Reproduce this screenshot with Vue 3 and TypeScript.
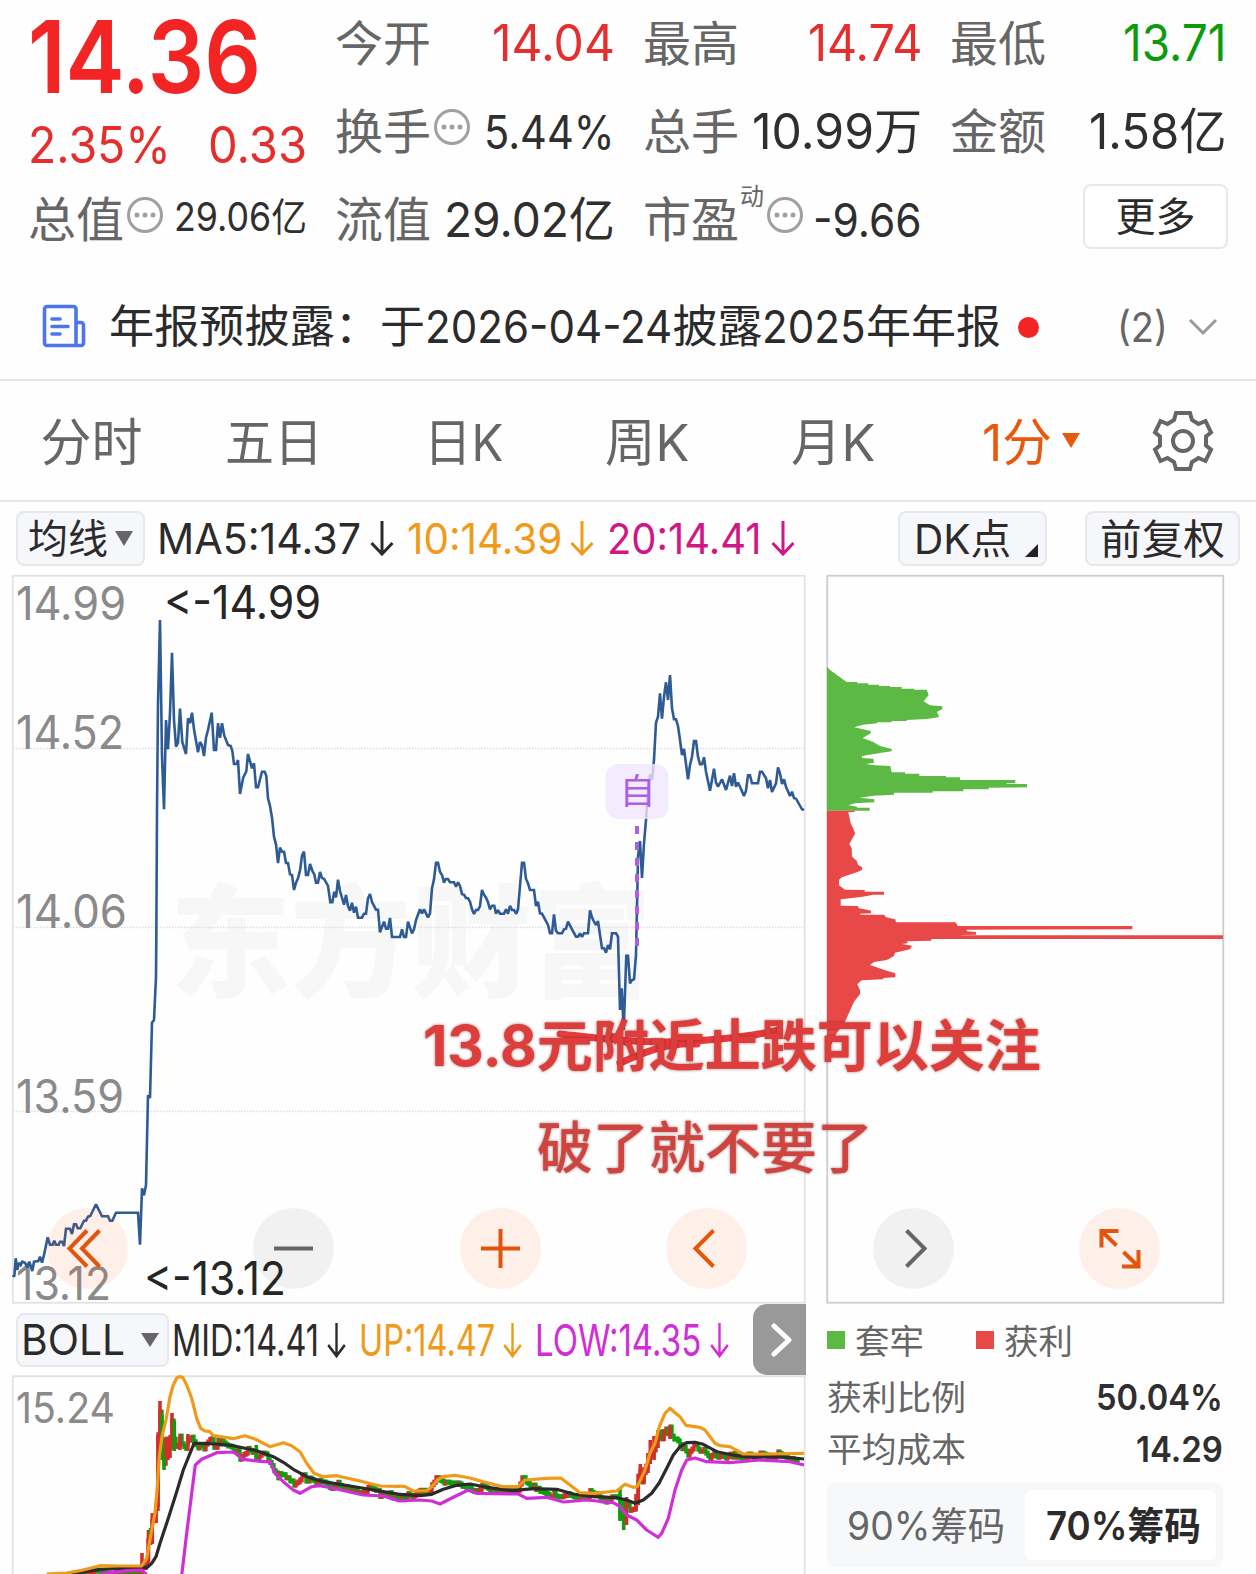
<script setup lang="ts">
import type { Directive } from 'vue'

type Pt = [number, number]
interface Quote { label: string; value: string; width: number; size: number; tone?: string; info?: boolean }

// Condenses or widens a run of text so that it takes exactly the given width.
const vFit: Directive<HTMLElement, number> = {
  mounted(el, { value }) {
    const natural = el.offsetWidth
    el.style.transform = `scaleX(${value / natural})`
    el.style.marginRight = `${value - natural}px`
  },
}

const quotes: Quote[] = [
  { label: '今开', value: '14.04', width: 123, size: 50, tone: 'up' },
  { label: '最高', value: '14.74', width: 114, size: 50, tone: 'up' },
  { label: '最低', value: '13.71', width: 103, size: 50, tone: 'down' },
  { label: '换手', value: '5.44%', width: 131, size: 46, info: true },
  { label: '总手', value: '10.99万', width: 170, size: 49 },
  { label: '金额', value: '1.58亿', width: 137, size: 49 },
]

const tabs = ['分时', '五日', '日K', '周K', '月K']
const tabWidths = [102, 98, 79, 84, 84]

// Series are stored in thirds of a pixel relative to an origin.
function series(ox: number, oy: number, raw: string): Pt[] {
  return raw.trim().split(/\s+/).map((p) => {
    const [x, y] = p.split(',').map(Number)
    return [ox + x / 3, oy + y / 3]
  })
}
const toPoints = (pts: Pt[]) => pts.map((p) => `${p[0].toFixed(1)},${p[1].toFixed(1)}`).join(' ')

const price: Pt[] = [
  ...series(0, 940, `38,1005 43,1010 47,955 52,990 57,968 62,975 67,965 75,968 82,982 88,965 97,993 102,965 115,963 120,950 126,968 132,945 143,892 150,914 158,914 163,902 168,914 176,914 180,905 186,905 192,918 198,866 210,866 216,882 222,853 228,853 233,865 241,865 252,842 258,842 264,830 271,828 288,793 306,829 324,829 330,842 337,842 348,818 414,818 420,914 426,745 432,766 438,735 444,466 450,474 456,248 462,240 468,110`),
  ...series(0, 570, `469,1110 471,720 474,400 480,150 486,560 492,718 498,450 504,538 510,430 516,248 522,450 528,530 534,518 540,416 547,516 558,552 564,445 570,460 576,428 582,478 594,547 600,516 606,526 612,558 618,503 624,480 635,428 642,540 648,540 654,460 660,503 666,460 673,497 684,525 692,528 697,542 702,582 710,582 714,570 720,672 730,622 739,604 744,552 756,595 762,580 768,652 774,652 786,605 794,605 799,617 804,685 810,708 816,743 822,800 828,823 834,879 840,833 846,845 852,845 858,879 864,879 870,913 876,915 882,960 888,938 894,925 900,902 906,857 912,845 918,915 924,915 930,882 938,905 943,913 948,938 954,938 960,906 966,924 972,926 984,948 991,997 997,997 1003,965 1008,982 1014,929 1020,963 1032,1004 1038,975 1044,1008 1050,1022 1056,998 1062,1028 1068,1010 1074,1043 1086,1043 1092,1031 1098,1031 1104,985 1110,972 1116,996 1128,1019 1134,1019 1140,1087 1152,1055 1158,1076 1164,1076 1170,1044 1176,1101 1198,1101`),
  ...series(400, 640, `0,891 6,868 12,891 18,891 24,845 36,880 42,868 48,840 60,808 66,820 72,808 78,820 84,832 90,820 96,745 102,718 108,668 114,668 120,695 126,705 132,728 137,717 144,717 150,727 162,727 168,740 174,727 180,738 186,762 192,764 198,774 204,775 210,785 216,808 222,822 228,810 234,810 240,798 246,750 252,764 258,773 264,787 270,808 276,797 283,797 288,821 294,810 300,821 312,821 318,808 324,821 330,797 336,810 342,810 349,821 354,808 360,738 366,668 372,668 378,717 384,730 390,750 402,750 408,798 414,785 420,820 426,821 432,832 444,855 450,880 456,880 462,823 468,872 474,880 486,880 492,868 498,866 504,845 516,868 528,890 534,890 540,880 546,891 552,880 564,880 570,811 576,832 582,845 588,855 594,843 600,885 606,925 612,925 618,938 624,915 630,928 636,880 648,880 654,890 660,1110 665,1045 671,1170 679,947 684,947 690,1030 696,1020 702,1018 708,945 712,760 714,650 720,603 726,714 732,610 738,540 744,450 750,403 756,420 762,360 768,248 774,230 780,160 786,236 792,170 798,127 804,180 810,105 816,205 822,238 828,238 834,258 840,300 846,345 852,327 858,372 864,418 870,375 876,350 882,303 888,303 894,350 900,373 906,373 912,352 918,395 930,452 942,386 948,428 954,440 966,418 978,450 990,407 996,438 1002,400 1008,440 1014,428 1020,440 1032,468 1038,452 1044,406 1050,406 1056,430 1074,430 1080,395 1086,395 1098,415 1104,445 1110,420 1116,456 1128,430 1134,382 1140,400 1146,432 1152,418 1158,440 1170,468 1176,455 1182,474 1188,476 1206,508 1212,510`),
]

const trapped = series(810, 640, `51,80 60,90 110,126 142,126 142,130 175,130 175,134 207,134 207,138 240,138 240,141 275,141 275,146 312,146 312,149 350,149 356,165 341,184 360,196 397,199 397,208 380,216 386,226 386,232 350,237 290,240 290,243 245,243 245,247 202,247 202,250 158,254 133,262 182,273 182,280 158,294 190,306 210,318 245,327 245,334 210,339 156,348 156,354 190,356 192,368 168,372 195,376 241,378 245,397 285,397 285,401 328,401 328,408 408,408 408,412 450,412 450,420 616,420 616,430 590,430 590,432 651,432 651,442 536,443 536,448 460,448 460,454 368,454 368,458 252,458 252,464 190,467 148,473 193,478 193,487 135,490 115,496 141,500 141,503 179,503 179,512 51,512`)
const profit = series(810, 640, `51,512 134,512 134,516 115,517 122,550 136,580 118,612 125,625 126,650 140,662 144,674 156,682 156,690 140,697 95,712 87,720 87,736 105,749 164,750 164,755 222,755 222,764 190,764 158,770 125,774 92,778 92,797 145,798 145,804 183,812 183,820 151,821 151,824 222,824 228,832 256,838 258,847 437,847 443,858 967,858 967,868 470,869 470,874 498,876 498,884 452,885 452,886 1239,886 1239,897 364,897 364,902 292,904 292,910 276,912 306,917 300,928 255,938 252,948 230,960 192,966 180,975 230,992 256,1000 256,1012 220,1014 220,1018 155,1021 142,1033 150,1050 150,1062 132,1085 105,1145 80,1180 65,1210 51,1260`)

const upper: Pt[] = [
  ...series(0, 1300, `140,822 200,819 240,812 300,797 350,798 425,798 440,775 455,690 465,640 472,560 478,470 486,410 498,360 510,290 520,255 530,234 538,230 548,232 560,255 575,295 590,355 602,385 615,393 630,395 640,407 660,410 700,416 735,407 765,417 810,440 850,428 875,437 900,455 920,490 942,520 970,530 1010,527 1080,543 1140,558 1198,559`),
  ...series(400, 1300, `0,558 15,560 40,573 80,572 95,560 112,540 130,530 165,526 210,534 250,545 310,560 355,560 375,540 440,535 482,534 510,555 540,578 580,580 650,573 675,553 700,562 712,560 735,510 750,460 765,430 778,380 795,340 810,325 825,338 840,350 858,376 900,382 915,390 945,430 960,437 990,440 1030,462 1110,462 1212,460`),
]
const middle: Pt[] = [
  ...series(0, 1300, `200,824 300,808 420,803 440,803 455,790 468,770 480,730 505,655 530,575 550,510 582,430 600,430 650,432 700,437 770,452 820,470 850,487 880,508 920,530 970,545 1050,558 1150,575 1198,583`),
  ...series(400, 1300, `0,583 60,587 95,583 130,568 170,556 210,552 260,562 340,572 400,566 470,568 520,582 580,590 650,593 680,600 705,610 730,600 755,580 778,548 800,505 820,465 840,440 860,428 885,427 910,433 950,455 1010,467 1060,472 1140,470 1212,477`),
]
const lowerStart = series(0, 1300, `300,822 380,812 425,810 440,824`)
const lower: Pt[] = [
  ...series(0, 1300, `545,826 560,700 575,580 586,495 605,478 650,458 700,456 730,478 790,485 810,485 825,520 850,545 880,570 900,580 935,560 960,557 1010,567 1090,585 1150,588 1198,603`),
  ...series(400, 1300, `0,603 60,600 95,603 120,612 160,592 205,570 230,580 355,582 380,595 440,592 490,606 560,600 640,608 660,620 680,645 710,660 740,690 775,712 785,700 805,655 825,570 845,510 860,480 885,474 920,485 990,488 1080,480 1170,485 1212,495`),
]

// One candle every two pixels, taken from the price series and rescaled for the BOLL pane.
const RISE = '#d0302c'
const FALL = '#0f9d0f'
function priceAt(x: number): number {
  for (let i = 1; i < price.length; i++) {
    const [x0, y0] = price[i - 1]
    const [x1, y1] = price[i]
    if (x <= x1) return x1 === x0 ? y1 : y0 + ((y1 - y0) * (x - x0)) / (x1 - x0)
  }
  return price[price.length - 1][1]
}
const candles = Array.from({ length: 376 }, (_, i) => {
  const x = 48 + i * 2
  const open = 1463 + (priceAt(x - 2) - 810) * 0.27
  const close = 1463 + (priceAt(x) - 810) * 0.27
  const top = Math.min(open, close) - 2
  return { x: x - 1.7, y: top, h: Math.abs(open - close) + 5, fill: close < open || (close === open && i % 3 === 0) ? RISE : FALL }
})
// Candles with a wide trading range: x, high, low, rising.
const spikes = ([
  [142, 1553, 1574, 1], [148.5, 1530, 1562, 1], [150.5, 1528, 1545, 0], [152.3, 1513, 1544, 1], [156, 1503, 1523, 1],
  [158, 1435, 1507, 1], [160, 1401, 1436, 1], [162, 1415, 1460, 0], [164, 1438, 1470, 0], [166, 1438, 1458, 1],
  [168, 1438, 1460, 1], [170, 1439, 1458, 1], [172, 1413, 1450, 1], [174.3, 1421, 1451, 0], [180, 1436, 1450, 1],
  [188, 1434, 1446, 1], [256.300, 1445, 1462, 0], [620, 1488, 1521, 0], [623.7, 1500, 1530, 0], [626.5, 1497, 1525, 1],
  [636, 1494, 1510, 1], [638.3, 1480, 1505, 1], [640.3, 1464, 1483, 1], [644, 1467, 1483, 1], [648, 1453, 1473, 1],
  [650.3, 1440, 1464, 1], [654, 1436, 1460, 1], [658, 1430, 1448, 1], [664, 1429, 1441, 1], [670, 1427, 1439, 1],
] as number[][]).map(([x, y, low, up]) => ({ x: x - 1.8, y, h: low - y, fill: up ? RISE : FALL }))

const axis = [
  { t: '14.99', y: 620, w: 110 },
  { t: '14.52', y: 749, w: 108 },
  { t: '14.06', y: 928, w: 111 },
  { t: '13.59', y: 1113, w: 108 },
  { t: '13.12', y: 1299.5, w: 95 },
]
const grid = [748.5, 927.5, 1111.5]

const tools = [
  { hot: true, d: 'M40 22.500L22.500 40.500L40 58.500M52.500 22.500L35 40.500L52.500 58.500' },
  { hot: false, d: 'M21 40.500H60' },
  { hot: true, d: 'M21 40.500H60M40.500 21V60' },
  { hot: true, d: 'M47.500 22.500L29.500 40.500L47.500 58.500' },
  { hot: false, d: 'M33.500 22.500L51.500 40.500L33.500 58.500' },
  { hot: true, d: 'M22.500 39.500V23H39.500M22.500 23L37.500 37.500M43 58.500H59.500V42M59.500 58.500L44.500 44' },
]
</script>

<template>
  <main class="page">
    <header class="quote">
      <div class="now">
        <div class="last"><span v-fit="233" class="fit">14.36</span></div>
        <div class="change"><span v-fit="143" class="fit">2.35%</span><span v-fit="99" class="fit">0.33</span></div>
      </div>
      <div v-for="(q, i) in quotes" :key="q.label" class="cell" :class="{ lowered: i > 2 }">
        <span class="label">{{ q.label }}</span>
        <svg v-if="q.info" class="info" viewBox="0 0 38 38"><circle cx="19" cy="19" r="16.500" /><path d="M11 19h.01M19 19h.01M27 19h.01" /></svg>
        <span v-fit="q.width" class="fit value" :class="[q.tone, 's' + q.size]">{{ q.value }}</span>
      </div>
      <div class="cell lowered">
        <span class="label">总值</span>
        <svg class="info" viewBox="0 0 38 38"><circle cx="19" cy="19" r="16.500" /><path d="M11 19h.01M19 19h.01M27 19h.01" /></svg>
        <span v-fit="133" class="fit value s39 cap">29.06亿</span>
      </div>
      <div class="cell lowered">
        <span class="label">流值</span>
        <span v-fit="171" class="fit value s48">29.02亿</span>
      </div>
      <div class="cell lowered">
        <span class="label">市盈</span><span class="sup">动</span>
        <svg class="info" viewBox="0 0 38 38"><circle cx="19" cy="19" r="16.500" /><path d="M11 19h.01M19 19h.01M27 19h.01" /></svg>
        <span v-fit="109" class="fit value s46">-9.66</span>
      </div>
      <div class="more-cell"><button class="more">更多</button></div>
    </header>

    <section class="notice">
      <svg class="doc" viewBox="0 0 44 44" fill="none"><path d="M34 41V5a2.500 2.500 0 0 0-2.500-2.500H5A2.500 2.500 0 0 0 2.500 5v34A2.500 2.500 0 0 0 5 41.500h34a2.500 2.500 0 0 0 2.500-2.500V21a2.500 2.500 0 0 0-2.500-2.500h-5M10 15h8M10 22.500h16M10 30h8" /></svg>
      <p class="headline">
        <span v-fit="271" class="fit">年报预披露：</span><span v-fit="45" class="fit">于</span><span v-fit="247" class="fit">2026-04-24</span><span v-fit="90" class="fit">披露</span><span v-fit="104" class="fit">2025</span><span v-fit="135" class="fit">年年报</span>
      </p>
      <i class="dot"></i>
      <span v-fit="51" class="fit count">(2)</span>
      <svg class="chev" viewBox="0 0 30 18"><path d="M2 2L15 15L28 2" /></svg>
    </section>

    <nav class="tabs">
      <div v-for="(t, i) in tabs" :key="t"><span v-fit="tabWidths[i]" class="fit">{{ t }}</span></div>
      <div class="active"><span v-fit="70" class="fit">1分</span><i class="tri"></i></div>
      <div>
        <svg class="gear" viewBox="-32 -32 64 64"><path d="M-7-28H7L9-21L15.500-17L22.500-20L28-8.500L23-4.500V4.500L28 8.500L22.500 20L15.500 17L9 21L7 28H-7L-9 21L-15.500 17L-22.500 20L-28 8.500L-23 4.500V-4.500L-28-8.500L-22.500-20L-15.500-17L-9-21Z" /><circle r="10" /></svg>
      </div>
    </nav>

    <section class="averages">
      <button class="pill ma-pill"><span v-fit="80" class="fit">均线</span><i class="tri"></i></button>
      <span v-fit="204" class="fit ma5">MA5:14.37</span>
      <svg class="arrow a1" viewBox="0 0 24 36"><path d="M12 1V34M1.500 23L12 34L22.500 23" /></svg>
      <span v-fit="155" class="fit ma10">10:14.39</span>
      <svg class="arrow a2 ma10c" viewBox="0 0 24 36"><path d="M12 1V34M1.500 23L12 34L22.500 23" /></svg>
      <span v-fit="155" class="fit ma20">20:14.41</span>
      <svg class="arrow a1 ma20c" viewBox="0 0 24 36"><path d="M12 1V34M1.500 23L12 34L22.500 23" /></svg>
      <button class="pill dk-pill"><span v-fit="97" class="fit">DK点</span><i class="corner"></i></button>
      <button class="pill fq-pill"><span v-fit="125" class="fit">前复权</span></button>
    </section>

    <section class="charts">
      <svg class="price" viewBox="12 574 794 730">
        <text class="mark" x="170" y="987" textLength="482" lengthAdjust="spacingAndGlyphs">东方财富</text>
        <line v-for="g in grid" :key="g" class="gridline" x1="13" x2="805" :y1="g" :y2="g" />
        <rect class="frame" x="12.750" y="575.750" width="792" height="727" />
        <text v-for="a in axis" :key="a.t" class="axis" x="16" :y="a.y" :textLength="a.w" lengthAdjust="spacingAndGlyphs">{{ a.t }}</text>
        <polyline class="line" :points="toPoints(price)" />
        <text class="extreme" x="164" y="618.500" textLength="157" lengthAdjust="spacingAndGlyphs">&lt;-14.99</text>
        <text class="extreme" x="144" y="1294.500" textLength="142" lengthAdjust="spacingAndGlyphs">&lt;-13.12</text>
        <rect x="605.500" y="764" width="63" height="55" rx="13" fill="#f3e6ff" fill-opacity=".8" />
        <text class="self" x="619.500" y="804" textLength="36" lengthAdjust="spacingAndGlyphs">自</text>
        <path d="M637 826V946" stroke="#a862e0" stroke-width="4" stroke-dasharray="8 8" />
        <g class="scribble"><path d="M560 1034C595 1038 625 1042 660 1042S745 1038 779 1030" /><path d="M697 1044C668 1042 645 1052 620 1063M611 1036l17 7" /></g>
      </svg>
      <svg class="chips" viewBox="826 574 399 730">
        <rect class="frame dark" x="827.250" y="575.750" width="396" height="727" />
        <polygon :points="toPoints(trapped)" fill="#5cb944" />
        <polygon :points="toPoints(profit)" fill="#e84848" />
      </svg>
      <div class="note strong"><span v-fit="114" class="fit">13.8</span><span v-fit="504" class="fit">元附近止跌可以关注</span></div>
      <div class="note soft"><span v-fit="336" class="fit">破了就不要了</span></div>
      <div class="tools">
        <button v-for="(t, i) in tools" :key="i" :class="{ hot: t.hot }"><svg viewBox="0 0 81 81"><path :d="t.d" /></svg></button>
      </div>
    </section>

    <section class="bottom">
      <div class="boll">
        <div class="boll-bar">
          <button class="pill boll-pill"><span v-fit="104" class="fit">BOLL</span><i class="tri"></i></button>
          <span v-fit="147" class="fit b1">MID:14.41</span>
          <svg class="arrow b-arrow" viewBox="0 0 24 36" preserveAspectRatio="none"><path d="M12 1V34M1.500 23L12 34L22.500 23" /></svg>
          <span v-fit="136" class="fit b2">UP:14.47</span>
          <svg class="arrow b-arrow ma10c" viewBox="0 0 24 36" preserveAspectRatio="none"><path d="M12 1V34M1.500 23L12 34L22.500 23" /></svg>
          <span v-fit="166" class="fit b3">LOW:14.35</span>
          <svg class="arrow b-arrow lowc" viewBox="0 0 24 36" preserveAspectRatio="none"><path d="M12 1V34M1.500 23L12 34L22.500 23" /></svg>
          <button class="next"><svg viewBox="0 0 22 34"><path d="M3 3L18 17L3 31" /></svg></button>
        </div>
        <svg class="boll-chart" viewBox="12 1375 794 199">
          <path class="frame" d="M12.750 1574V1376.250H804.750V1574" />
          <text class="axis small" x="16" y="1423" textLength="99" lengthAdjust="spacingAndGlyphs">15.24</text>
          <rect v-for="(c, i) in candles" :key="i" :x="c.x" :y="c.y" width="3.400" :height="c.h" :fill="c.fill" />
          <rect v-for="(c, i) in spikes" :key="'s' + i" :x="c.x" :y="c.y" width="3.600" :height="c.h" :fill="c.fill" />
          <polyline class="band" :points="toPoints(middle)" stroke="#2b2b2b" />
          <polyline class="band" :points="toPoints(lowerStart)" stroke="#d02fd6" />
          <polyline class="band" :points="toPoints(lower)" stroke="#d02fd6" />
          <polyline class="band" :points="toPoints(upper)" stroke="#f09a1a" />
        </svg>
      </div>
      <aside class="cost">
        <div class="legend"><i class="g"></i><span v-fit="69" class="fit">套牢</span><i class="r"></i><span v-fit="69" class="fit">获利</span></div>
        <div class="stat"><span v-fit="139" class="fit">获利比例</span><b v-fit="127" class="fit">50.04%</b></div>
        <div class="stat"><span v-fit="139" class="fit">平均成本</span><b v-fit="87" class="fit">14.29</b></div>
        <div class="segment">
          <div><span v-fit="158" class="fit">90%筹码</span></div>
          <div class="on"><span v-fit="155" class="fit">70%筹码</span></div>
        </div>
      </aside>
    </section>
  </main>
</template>

<style>
body { background: #fefefe; }
</style>

<style scoped>
.page { width: 1256px; height: 1574px; overflow: hidden; background: #fefefe; font-family: Inter, "Noto Sans CJK SC", sans-serif; color: #2b2b2b; display: flex; flex-direction: column; }
.page * { box-sizing: border-box; }
button { font: inherit; color: inherit; padding: 0; margin: 0; }
svg { display: block; flex: none; }
.fit { display: inline-block; white-space: nowrap; transform-origin: 0 50%; flex: none; }
i { display: block; flex: none; }

.quote { height: 262px; flex: none; padding-left: 28px; display: grid; grid-template-columns: 279px 280px 279px 276px; column-gap: 28px; grid-template-rows: 86px 88px 88px; }
.now { grid-row: span 2; color: #f22424; }
.last { height: 113px; line-height: 113px; font-size: 101px; font-weight: 600; }
.change { height: 62px; line-height: 64px; display: flex; justify-content: space-between; font-size: 50px; color: #e52e2e; }
.cell { display: flex; align-items: baseline; line-height: 87px; }
.lowered { line-height: 91px; }
.label { font-size: 48px; color: #666; white-space: nowrap; }
.info { width: 38px; height: 38px; align-self: flex-start; margin-top: 22px; margin-left: 2px; fill: none; stroke: #a0a0a0; stroke-width: 3; }
.info path { stroke-width: 5; stroke-linecap: round; }
.sup { font-size: 24px; line-height: 30px; align-self: flex-start; margin-top: 8px; margin-left: 1px; color: #666; }
.sup + .info { margin-left: 2px; }
.value { margin-left: auto; color: #2f2f2f; }
.up { color: #e52e2e; }
.down { color: #0a9c0a; }
.s50 { font-size: 50px; }
.s49 { font-size: 49px; }
.s48 { font-size: 48px; }
.s46 { font-size: 46px; }
.s39 { font-size: 39px; }
.cap { align-self: flex-start; line-height: 85px; }
.more-cell { display: flex; justify-content: flex-end; padding-top: 10px; margin-right: -2px; }
.more { width: 145px; height: 65px; border: 2px solid #e6e8ea; border-radius: 8px; background: #fff; font-size: 40px; line-height: 60px; }

.notice { height: 119px; flex: none; border-bottom: 2px solid #e4e6e8; display: flex; align-items: center; padding: 21px 0 0 42px; }
.doc { width: 44px; height: 44px; margin-right: 23px; margin-top: -10px; stroke: #4a76ee; stroke-width: 3.600; stroke-linecap: round; }
.headline { margin: 0; display: flex; width: 892px; font-size: 45px; line-height: 60px; margin-top: -8px; }
.dot { width: 21px; height: 21px; border-radius: 50%; background: #f22424; margin: -8px 0 0 17px; }
.count { color: #666; font-size: 41px; margin-top: -9px; margin-left: 78px; }
.chev { width: 30px; height: 18px; margin-top: -8px; margin-left: 20px; fill: none; stroke: #999; stroke-width: 3; }

.tabs { height: 121px; flex: none; border-bottom: 2px solid #e4e6e8; display: grid; grid-template-columns: 183px 183px 196px 170px 202px 194px 110px; align-items: center; font-size: 51px; line-height: 70px; color: #666; }
.tabs div { display: flex; justify-content: center; align-items: center; }
.tabs .fit { padding-top: 5px; }
.tri { width: 0; height: 0; border: 9px solid transparent; border-top: 15px solid #666; border-bottom: 0; }
.active { color: #e8590c; }
.active .tri { border-top-color: #e8590c; margin-left: 10px; }
.gear { width: 64px; height: 64px; fill: none; stroke: #666; stroke-width: 4; }

.averages { height: 72px; flex: none; display: flex; align-items: center; font-size: 42px; line-height: 50px; padding-left: 16px; }
.averages .fit { padding-top: 2px; }
.pill { height: 55px; border: 2px solid #e6e8ec; border-radius: 8px; background: #f6f7fa; display: flex; align-items: center; flex: none; }
.ma-pill { width: 129px; padding-left: 10px; font-size: 40px; }
.ma-pill .tri { margin-left: 7px; }
.ma5 { margin-left: 12px; }
.arrow { width: 24px; height: 36px; fill: none; stroke: #2b2b2b; stroke-width: 3; }
.a1 { margin-left: 9px; }
.a2 { margin-left: 8px; }
.ma10 { margin-left: 13px; color: #f09a1a; }
.ma20 { margin-left: 13px; color: #cf1786; }
.arrow.ma10c { stroke: #f09a1a; }
.arrow.ma20c { stroke: #cf1786; }
.arrow.lowc { stroke: #d02fd6; }
.dk-pill { width: 149px; margin-left: 103px; padding-left: 14px; font-size: 41px; }
.corner { width: 0; height: 0; border-left: 13px solid transparent; border-bottom: 13px solid #222; margin: 24px 0 0 14px; }
.fq-pill { width: 155px; margin-left: 38px; padding-left: 13px; font-size: 41px; }

.charts { position: relative; height: 730px; flex: none; display: flex; padding-left: 12px; gap: 20px; }
.price { width: 794px; height: 730px; }
.chips { width: 399px; height: 730px; }
.frame { fill: none; stroke: #e2e2e2; stroke-width: 1.800; }
.frame.dark { stroke: #ccc; }
.gridline { stroke: #ddd; stroke-width: 1.300; stroke-dasharray: 1.500 1.500; }
.mark { font: 900 122px "Noto Sans CJK SC", sans-serif; fill: #f7f7f7; }
.axis { font-size: 46px; fill: #8a8a8a; }
.axis.small { font-size: 42px; }
.extreme { font-size: 46px; fill: #262626; }
.line { fill: none; stroke: #2f5b94; stroke-width: 2.600; stroke-linejoin: miter; stroke-miterlimit: 2; }
.self { font-size: 35px; fill: #ab5fe8; }
.scribble { fill: none; stroke: #e8393c; stroke-width: 7; stroke-linecap: round; }
.note { position: absolute; display: flex; white-space: nowrap; color: #de3e3b; text-shadow: 0 0 3px rgba(90, 20, 20, .6); font-size: 56px; line-height: 70px; }
.strong { left: 423px; top: 437px; font-weight: 700; }
.soft { left: 537px; top: 539px; font-weight: 500; color: #d0443f; }
.tools { position: absolute; left: 47px; top: 634px; width: 1113px; display: flex; justify-content: space-between; }
.tools button { width: 81px; height: 81px; border: 0; border-radius: 50%; background: rgba(0, 0, 0, .05); }
.tools button.hot { background: rgba(255, 96, 20, .09); }
.tools svg { fill: none; stroke: #666; stroke-width: 4; }
.tools .hot svg { stroke: #e0560c; }

.bottom { flex: none; height: 270px; display: flex; }
.boll { width: 806px; padding-left: 12px; }
.boll-bar { height: 71px; display: flex; align-items: center; font-size: 44px; line-height: 50px; }
.boll-pill { width: 153px; height: 54px; margin-left: 4px; margin-top: 1px; padding-left: 3px; font-size: 42px; }
.boll-pill .tri { margin-left: 16px; border-top-width: 14px; }
.b1 { margin-left: 3px; }
.b2 { margin-left: 13px; color: #f09a1a; }
.b3 { margin-left: 13px; color: #d02fd6; }
.b-arrow { width: 19px; margin-left: 8px; }
.next { width: 53px; height: 71px; margin-left: auto; border: 0; border-radius: 14px 0 0 14px; background: #999; display: flex; align-items: center; justify-content: center; padding-left: 4px; }
.next svg { width: 22px; height: 34px; fill: none; stroke: #fff; stroke-width: 5; stroke-linecap: round; stroke-linejoin: round; }
.boll-chart { width: 794px; height: 199px; }
.band { fill: none; stroke-width: 3.200; stroke-linejoin: round; }

.cost { width: 396px; margin-left: 21px; }
.legend { display: flex; align-items: center; height: 70px; font-size: 34px; color: #666; }
.legend i { width: 18px; height: 18px; margin-right: 10px; margin-top: 2px; }
.legend .g { background: #5cb944; }
.legend .r { background: #e84848; margin-left: 52px; }
.stat { height: 52px; line-height: 47px; display: flex; justify-content: space-between; align-items: baseline; font-size: 34px; color: #666; }
.stat b { font-size: 36px; font-weight: 600; color: #2f2f2f; }
.segment { margin-top: 5px; height: 84px; background: #f7f8fa; border-radius: 7px; display: flex; padding: 7px; color: #666; font-size: 39px; line-height: 71px; }
.segment div { width: 191px; height: 70px; border-radius: 7px; padding-left: 13px; }
.segment .on { background: #fff; color: #2b2b2b; font-weight: 600; padding-left: 21px; }
</style>
